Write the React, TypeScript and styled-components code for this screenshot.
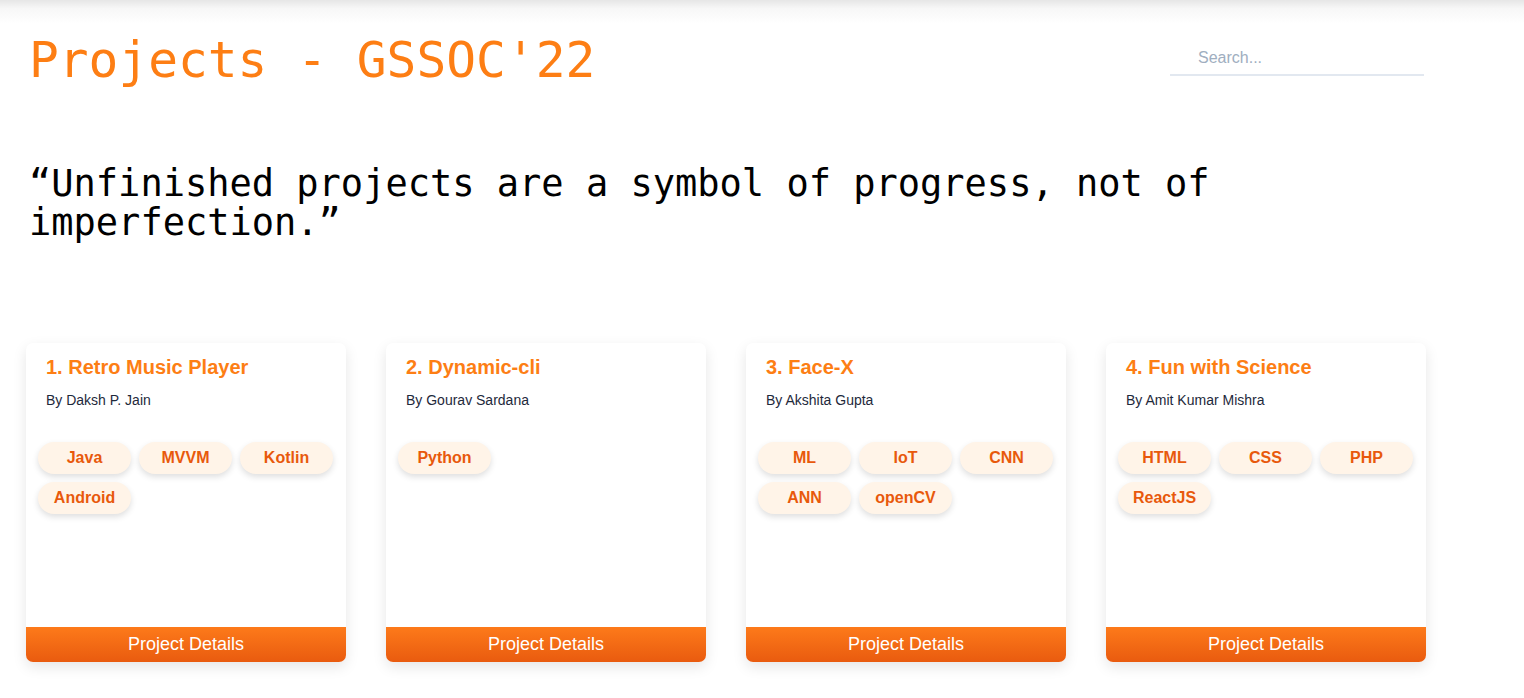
import React from "react";
import styled, { createGlobalStyle } from "styled-components";

const GlobalStyle = createGlobalStyle`
  html, body { margin: 0; padding: 0; background: #ffffff; }
  body { font-family: "Liberation Sans", Arial, sans-serif; }
  * { box-sizing: border-box; }
`;

const Page = styled.div`
  width: 1524px;
  min-height: 698px;
  background: #ffffff;
`;

const TopShade = styled.div`
  height: 24px;
  background: linear-gradient(to bottom, #e6e6e6 0%, #f7f7f7 35%, #ffffff 100%);
`;

const Container = styled.main`
  width: 1400px;
  margin-left: 26px;
  display: flex;
  flex-direction: column;
`;

const Header = styled.header`
  display: flex;
  justify-content: space-between;
  align-items: flex-start;
  padding-top: 12px;
`;

const Title = styled.h1`
  margin: 0;
  font-family: "DejaVu Sans Mono", "Liberation Mono", monospace;
  font-weight: 400;
  font-size: 49.5px;
  line-height: 49px;
  color: #fd7e14;
  padding-left: 3px;
`;

const SearchInput = styled.input`
  width: 254px;
  height: 39px;
  margin-top: 1px;
  margin-right: 2px;
  border: none;
  border-bottom: 2px solid #e2e8f0;
  padding: 4px 0 0 28px;
  font-family: "Liberation Sans", Arial, sans-serif;
  font-size: 16px;
  color: #2d3748;
  background: transparent;
  outline: none;
  &::placeholder { color: #a0aec0; }
`;

const Quote = styled.blockquote`
  margin: 79px 0 0 0;
  padding-left: 3px;
  width: 1220px;
  font-family: "DejaVu Sans Mono", "Liberation Mono", monospace;
  font-size: 37px;
  line-height: 39px;
  color: #000000;
`;

const CardGrid = styled.section`
  margin-top: 101px;
  display: grid;
  grid-template-columns: repeat(4, 320px);
  column-gap: 40px;
`;

const Card = styled.article`
  height: 319px;
  background: #ffffff;
  border-radius: 7px;
  box-shadow: 0 5px 14px rgba(0, 0, 0, 0.1);
  display: flex;
  flex-direction: column;
  overflow: hidden;
`;

const CardBody = styled.div`
  padding: 13px 12px 0 12px;
  display: flex;
  flex-direction: column;
`;

const CardTitle = styled.h2`
  margin: 0;
  padding-left: 8px;
  font-family: "Liberation Sans", Arial, sans-serif;
  font-weight: 700;
  font-size: 20px;
  line-height: 23px;
  color: #fd7e14;
`;

const Author = styled.p`
  margin: 13px 0 0 0;
  padding-left: 8px;
  font-size: 14px;
  line-height: 16px;
  color: #1e293b;
`;

const TagList = styled.div`
  margin-top: 34px;
  display: flex;
  flex-wrap: wrap;
  gap: 8px 8px;
`;

const Tag = styled.span`
  width: 93px;
  height: 32px;
  border-radius: 16px;
  background: #fff4e8;
  box-shadow: 0 3px 6px rgba(0, 0, 0, 0.13);
  display: flex;
  align-items: center;
  justify-content: center;
  font-weight: 700;
  font-size: 16px;
  color: #e8590c;
`;

const DetailsButton = styled.button`
  margin-top: auto;
  height: 35px;
  border: none;
  background: linear-gradient(to bottom, #fd7a1a 0%, #e95b0f 100%);
  color: #ffffff;
  font-family: "Liberation Sans", Arial, sans-serif;
  font-size: 18px;
  line-height: 35px;
  padding: 0;
  cursor: pointer;
`;

type Project = { title: string; author: string; tags: string[] };

const projects: Project[] = [
  { title: "1. Retro Music Player", author: "By Daksh P. Jain", tags: ["Java", "MVVM", "Kotlin", "Android"] },
  { title: "2. Dynamic-cli", author: "By Gourav Sardana", tags: ["Python"] },
  { title: "3. Face-X", author: "By Akshita Gupta", tags: ["ML", "IoT", "CNN", "ANN", "openCV"] },
  { title: "4. Fun with Science", author: "By Amit Kumar Mishra", tags: ["HTML", "CSS", "PHP", "ReactJS"] },
];

export default function App() {
  return (
    <Page>
      <GlobalStyle />
      <TopShade />
      <Container>
        <Header>
          <Title>Projects - GSSOC'22</Title>
          <SearchInput placeholder="Search..." />
        </Header>
        <Quote>“Unfinished projects are a symbol of progress, not of imperfection.”</Quote>
        <CardGrid>
          {projects.map((p) => (
            <Card key={p.title}>
              <CardBody>
                <CardTitle>{p.title}</CardTitle>
                <Author>{p.author}</Author>
                <TagList>
                  {p.tags.map((t) => (
                    <Tag key={t}>{t}</Tag>
                  ))}
                </TagList>
              </CardBody>
              <DetailsButton>Project Details</DetailsButton>
            </Card>
          ))}
        </CardGrid>
      </Container>
    </Page>
  );
}
